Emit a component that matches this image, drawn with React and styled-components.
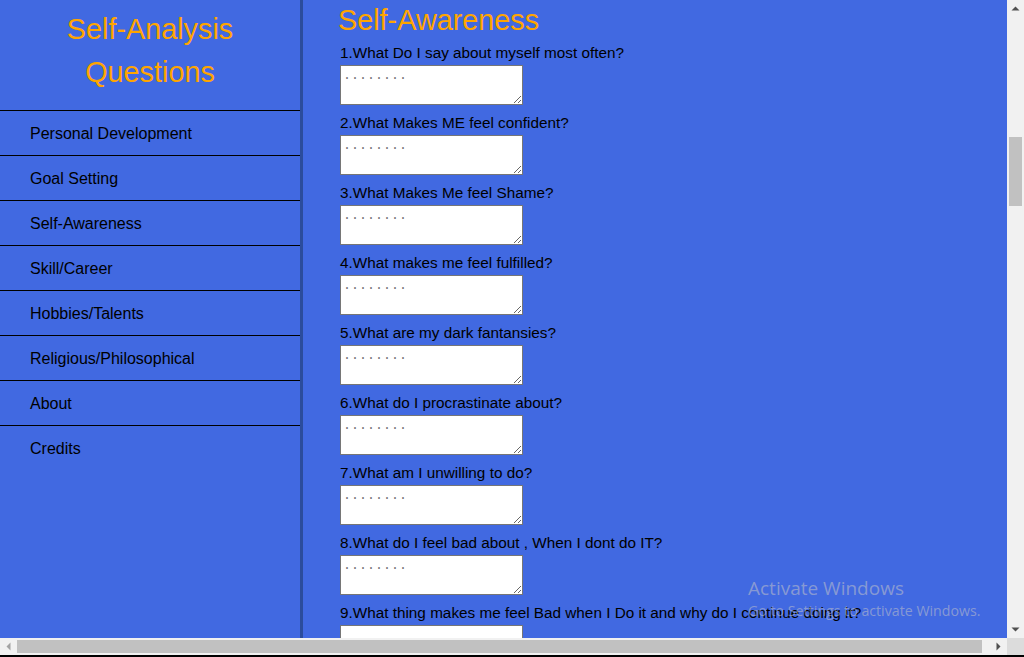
import React from "react";
import styled, { createGlobalStyle } from "styled-components";

const Global = createGlobalStyle`
  html, body { margin: 0; padding: 0; overflow: hidden; }
  body { font-family: "Liberation Sans", Arial, sans-serif; }
  * { box-sizing: border-box; }
`;

const Frame = styled.div`
  position: relative;
  width: 1024px;
  height: 657px;
  display: grid;
  grid-template-columns: 1fr 17px;
  grid-template-rows: 638px 17px 2px;
  overflow: hidden;
`;

const Main = styled.div`
  display: flex;
  background: #4169e1;
  overflow: hidden;
`;

const Sidebar = styled.aside`
  width: 303px;
  flex-shrink: 0;
  border-right: 3px solid #2b4c9c;
  display: flex;
  flex-direction: column;
`;

const SiteTitle = styled.h1`
  margin: 0;
  height: 110px;
  padding: 8px 10px 0;
  text-align: center;
  font-family: "Liberation Sans", Arial, sans-serif;
  font-weight: normal;
  font-size: 28.8px;
  line-height: 43.2px;
  color: #ffa500;
`;

const NavList = styled.ul`
  list-style: none;
  margin: 0;
  padding: 0;
`;

const NavItem = styled.li`
  height: 45px;
  border-top: 1px solid #000;
  padding: 14px 0 0 30px;
  font-size: 16px;
  line-height: 18px;
  color: #000;
`;

const Content = styled.section`
  flex: 1;
  padding: 4px 0 0 36px;
  display: flex;
  flex-direction: column;
`;

const Heading = styled.h2`
  margin: 0 0 7px -1px;
  font-weight: normal;
  font-size: 28.8px;
  line-height: 33px;
  color: #ffa500;
  white-space: nowrap;
`;

const Question = styled.div`
  display: flex;
  flex-direction: column;
  align-items: flex-start;
  margin: 0 0 9px 1px;
`;

const Label = styled.label`
  font-size: 15.3px;
  line-height: 18px;
  color: #000;
  white-space: nowrap;
  margin-bottom: 3px;
`;

const Answer = styled.textarea`
  width: 183px;
  height: 40px;
  flex-shrink: 0;
  padding: 2px;
  border: 1px solid #767676;
  background: #fff;
  font-family: "Liberation Mono", monospace;
  font-size: 13.333px;
  &::placeholder { color: #757575; }
`;

const VScroll = styled.div`
  background: #f1f1f1;
  display: flex;
  flex-direction: column;
`;

const ArrowBox = styled.div`
  height: 17px;
  width: 17px;
  display: flex;
  align-items: center;
  justify-content: center;
  flex-shrink: 0;
`;

const VTrack = styled.div`
  flex: 1;
  padding: 120px 2px 0;
`;

const VThumb = styled.div`
  height: 69px;
  background: #c1c1c1;
`;

const HScroll = styled.div`
  background: #f1f1f1;
  display: flex;
  align-items: stretch;
`;

const HTrack = styled.div`
  flex: 1;
  padding: 2px 8px 2px 0;
  display: flex;
`;

const HThumb = styled.div`
  flex: 1;
  background: #c1c1c1;
`;

const Corner = styled.div`
  background: #dcdcdc;
`;

const Strip = styled.div`
  grid-column: 1 / span 2;
  background: #000;
`;

const Watermark = styled.div`
  position: absolute;
  left: 748px;
  top: 576px;
  display: flex;
  flex-direction: column;
  font-family: "Open Sans", "Noto Sans", sans-serif;
  color: rgba(195, 195, 200, 0.55);
  pointer-events: none;
  white-space: nowrap;
`;

const WmTitle = styled.div`
  font-size: 19px;
  line-height: 24px;
`;

const WmSub = styled.div`
  font-size: 14.2px;
  line-height: 20px;
  margin-top: 1px;
`;

const Tri = ({ dir, color = "#505050" }) => {
  const pts = {
    up: "0.5,4.5 4.5,0.5 8.5,4.5",
    down: "0.5,0.5 8.5,0.5 4.5,4.5",
    left: "4.5,0.5 4.5,8.5 0.5,4.5",
    right: "0.5,0.5 0.5,8.5 4.5,4.5",
  }[dir];
  const vertical = dir === "up" || dir === "down";
  return (
    <svg width={vertical ? 9 : 5} height={vertical ? 5 : 9} viewBox={vertical ? "0 0 9 5" : "0 0 5 9"}>
      <polygon points={pts} fill={color} />
    </svg>
  );
};

const nav = [
  "Personal Development",
  "Goal Setting",
  "Self-Awareness",
  "Skill/Career",
  "Hobbies/Talents",
  "Religious/Philosophical",
  "About",
  "Credits",
];

const questions = [
  "1.What Do I say about myself most often?",
  "2.What Makes ME feel confident?",
  "3.What Makes Me feel Shame?",
  "4.What makes me feel fulfilled?",
  "5.What are my dark fantansies?",
  "6.What do I procrastinate about?",
  "7.What am I unwilling to do?",
  "8.What do I feel bad about , When I dont do IT?",
  "9.What thing makes me feel Bad when I Do it and why do I continue doing it?",
];

export default function App() {
  return (
    <>
      <Global />
      <Frame>
        <Main>
          <Sidebar>
            <SiteTitle>Self-Analysis Questions</SiteTitle>
            <NavList>
              {nav.map((n) => (
                <NavItem key={n}>{n}</NavItem>
              ))}
            </NavList>
          </Sidebar>
          <Content>
            <Heading>Self-Awareness</Heading>
            {questions.map((q, i) => (
              <Question key={i}>
                <Label>{q}</Label>
                <Answer placeholder={i === 8 ? "" : "........"} />
              </Question>
            ))}
          </Content>
        </Main>
        <VScroll>
          <ArrowBox>
            <Tri dir="up" />
          </ArrowBox>
          <VTrack>
            <VThumb />
          </VTrack>
          <ArrowBox>
            <Tri dir="down" />
          </ArrowBox>
        </VScroll>
        <HScroll>
          <ArrowBox>
            <Tri dir="left" color="#a3a3a3" />
          </ArrowBox>
          <HTrack>
            <HThumb />
          </HTrack>
          <ArrowBox>
            <Tri dir="right" />
          </ArrowBox>
        </HScroll>
        <Corner />
        <Strip />
        <Watermark>
          <WmTitle>Activate Windows</WmTitle>
          <WmSub>Go to Settings to activate Windows.</WmSub>
        </Watermark>
      </Frame>
    </>
  );
}
